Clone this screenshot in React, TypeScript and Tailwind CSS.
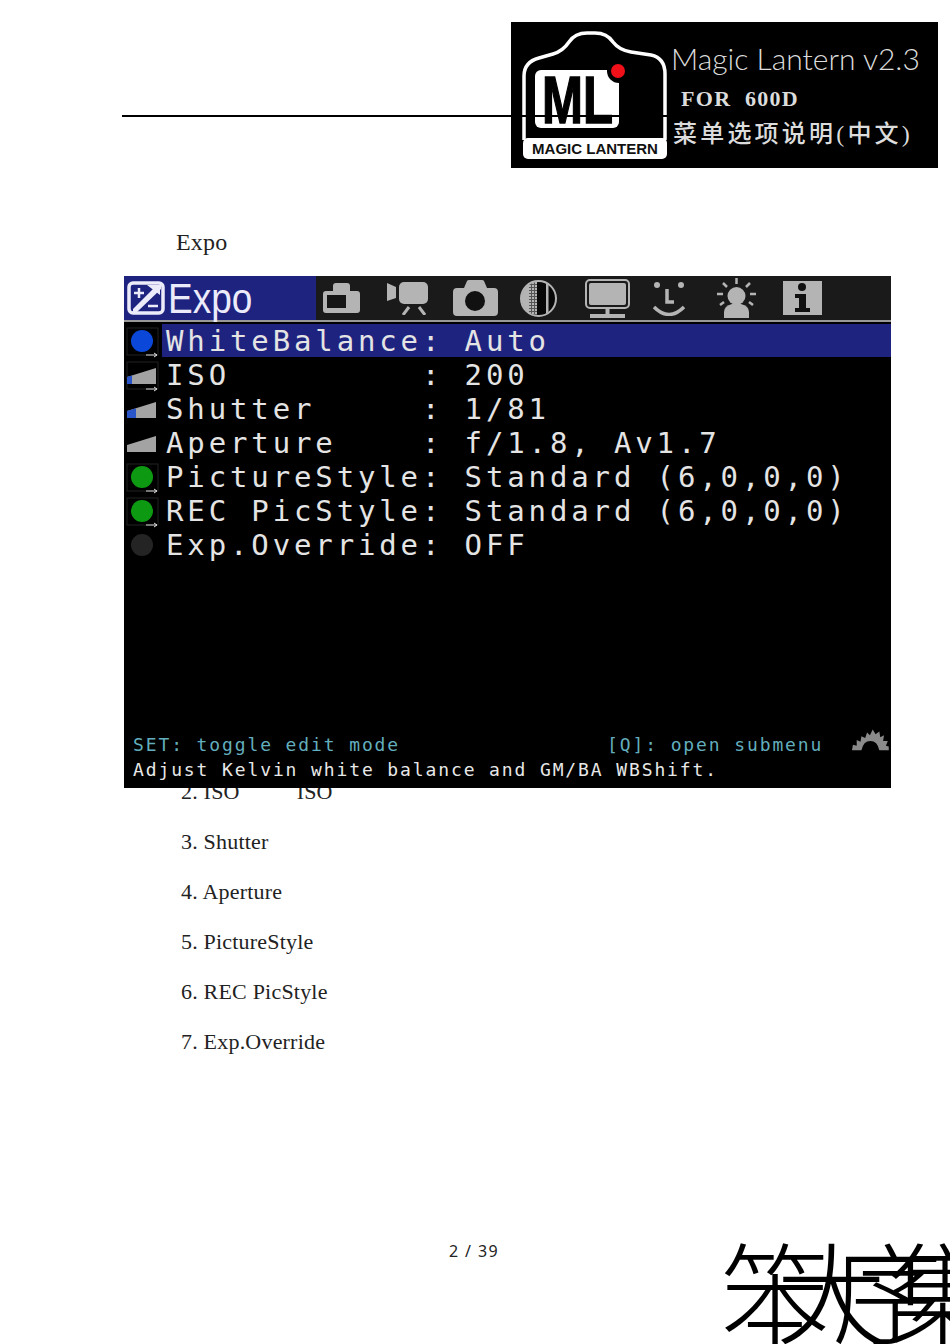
const MENU_FONT = "font-['DejaVu_Sans_Mono',monospace]";

const rows = [
  { kind: "blue", label: "WhiteBalance: Auto", active: true },
  { kind: "iso", label: "ISO         : 200" },
  { kind: "shutter", label: "Shutter     : 1/81" },
  { kind: "aperture", label: "Aperture    : f/1.8, Av1.7" },
  { kind: "green", label: "PictureStyle: Standard (6,0,0,0)" },
  { kind: "green", label: "REC PicStyle: Standard (6,0,0,0)" },
  { kind: "off", label: "Exp.Override: OFF" },
];

const notes = ["3. Shutter", "4. Aperture", "5. PictureStyle", "6. REC PicStyle", "7. Exp.Override"];

function StatusIcon({ kind }: { kind: string }) {
  const isDot = kind === "blue" || kind === "green" || kind === "off";
  const framed = kind === "blue" || kind === "green" || kind === "iso";
  const blueWidth = kind === "iso" ? 5 : kind === "shutter" ? 9 : 0;
  const dotColor = kind === "blue" ? "#0b47d8" : kind === "green" ? "#0d9a12" : "#242424";

  return (
    <svg viewBox="0 0 38 34" className="w-[38px] h-[34px] shrink-0">
      {framed && <rect x="3" y="4" width="31" height="27" fill="none" stroke="#222" strokeWidth="1" />}
      {framed && <path d="M22 31H33M30 29l3 2-3 2" fill="none" stroke="#ddd" strokeWidth="1" />}
      {isDot && <circle cx="18" cy="17" r="11" fill={dotColor} />}
      {!isDot && <path d="M3 19L32 10V26H3Z" fill="#a3a3a3" />}
      {blueWidth > 0 && <path d={`M3 19L${3 + blueWidth} ${19 - blueWidth * 0.31}V26H3Z`} fill="#2a55c8" />}
    </svg>
  );
}

function TabIcons() {
  const gray = "#b4b4b4";
  return (
    <>
      <svg viewBox="0 0 37 30" className="w-[37px] h-[30px] ml-[7px]">
        <path d="M10 8V3q0-3 3-3h11q3 0 3 3v5h7q3 0 3 3v16q0 3-3 3H3q-3 0-3-3V11q0-3 3-3Z" fill={gray} />
        <rect x="4" y="12" width="19" height="13" fill="#161616" />
      </svg>
      <svg viewBox="0 0 41 33" className="w-[41px] h-[33px] ml-[27px]">
        <rect x="12" y="0" width="29" height="22" rx="5" fill={gray} />
        <path d="M0 1L9 5V16L0 19Z" fill={gray} />
        <path d="M22 25L16 33M32 25L38 33" stroke={gray} strokeWidth="3" />
      </svg>
      <svg viewBox="0 0 45 36" className="w-[45px] h-[36px] ml-[25px]">
        <path d="M11 8L14 1q.5-1 2-1h13q1.500 0 2 1l3 7h7q4 0 4 4v20q0 4-4 4H4q-4 0-4-4V12q0-4 4-4Z" fill={gray} />
        <circle cx="22" cy="21" r="10" fill="#111" />
      </svg>
      <svg viewBox="0 0 37 39" className="w-[37px] h-[39px] ml-[22px]">
        <defs>
          <pattern id="dither" width="3" height="3" patternUnits="userSpaceOnUse">
            <rect width="3" height="3" fill="#555" />
            <rect width="2" height="2" fill={gray} />
          </pattern>
          <clipPath id="disc">
            <circle cx="18.500" cy="19.500" r="17" />
          </clipPath>
        </defs>
        <g clipPath="url(#disc)">
          <rect x="0" y="0" width="9" height="39" fill={gray} />
          <rect x="9" y="0" width="8" height="39" fill="url(#dither)" />
          <rect x="17" y="0" width="20" height="39" fill="#080808" />
          <rect x="26" y="0" width="2.500" height="39" fill={gray} />
        </g>
        <circle cx="18.500" cy="19.500" r="17.500" fill="none" stroke={gray} strokeWidth="2" />
      </svg>
      <svg viewBox="0 0 45 39" className="w-[45px] h-[39px] ml-[28px]">
        <rect x="1" y="1" width="43" height="28" rx="4" fill="none" stroke={gray} strokeWidth="2" />
        <rect x="4" y="4" width="37" height="22" rx="2" fill={gray} />
        <rect x="20.500" y="30" width="4" height="5" fill={gray} />
        <rect x="5" y="35" width="35" height="4" fill={gray} />
      </svg>
      <svg viewBox="0 0 32 35" className="w-[32px] h-[35px] ml-[23px]">
        <circle cx="4" cy="4" r="3" fill={gray} />
        <circle cx="28" cy="4" r="3" fill={gray} />
        <path d="M14 8V21H21" fill="none" stroke={gray} strokeWidth="3.500" />
        <path d="M1 26Q16 41 31 26" fill="none" stroke={gray} strokeWidth="3.500" />
      </svg>
      <svg viewBox="0 0 39 40" className="w-[39px] h-[40px] ml-[32px]">
        <circle cx="19.500" cy="18" r="9" fill={gray} />
        <path d="M7 40V34Q7 28 15 26H24Q32 28 32 34V40Z" fill={gray} />
        <path d="M19.500 0V6M6 5L10 9M33 5L29 9M0 16H6M33 16H39M3 27L7 24M36 27L32 24" stroke={gray} strokeWidth="2.500" />
      </svg>
      <svg viewBox="0 0 39 34" className="w-[39px] h-[34px] ml-[27px]">
        <rect width="39" height="34" fill={gray} />
        <circle cx="19" cy="6" r="4" fill="#111" />
        <path d="M12 13H23V27H27V31H12V27H16V17H12Z" fill="#111" />
      </svg>
    </>
  );
}

function Logo() {
  return (
    <div className="absolute left-[511px] top-[22px] w-[427px] h-[146px] bg-black flex">
      <svg viewBox="0 0 160 146" className="w-[160px] h-[146px] shrink-0">
        <path
          d="M13 118V54Q13 40 28 36L42 32Q52 29 58 20Q64 11 76 11H84Q96 11 102 20Q108 28 120 30L140 33Q154 36 154 52V118"
          fill="none"
          stroke="#fff"
          strokeWidth="3.500"
        />
        <rect x="24" y="48" width="84" height="58" rx="6" fill="#fff" />
        <circle cx="108" cy="49" r="12" fill="#000" />
        <circle cx="107" cy="49" r="7" fill="#f0101a" />
        <text x="31" y="101" fontFamily="Liberation Sans" fontWeight="700" fontSize="67" textLength="71" lengthAdjust="spacingAndGlyphs" stroke="#000" strokeWidth="1.500" fill="#000">
          ML
        </text>
        <rect x="12" y="116" width="144" height="21" rx="5" fill="#fff" />
        <text x="84" y="132" textAnchor="middle" fontFamily="Liberation Sans" fontWeight="700" fontSize="15" fill="#111">
          MAGIC LANTERN
        </text>
      </svg>
      <div className="flex flex-col text-[#dcdcdc]">
        <div className="font-['Lato',sans-serif] font-light text-[30px] leading-[36px] mt-[18px] whitespace-nowrap">Magic Lantern v2.3</div>
        <div className="font-['Liberation_Serif',serif] font-bold text-[22px] leading-[26px] mt-[10px] ml-[10px] tracking-[1.300px] whitespace-pre">FOR  600D</div>
        <div className="font-['Liberation_Serif','Noto_Sans_CJK_SC',serif] font-medium text-[24px] leading-[30px] mt-[7px] ml-[2px] tracking-[3.200px] whitespace-nowrap">菜单选项说明(中文)</div>
      </div>
    </div>
  );
}

export default function App() {
  return (
    <div className="relative w-[950px] h-[1344px] overflow-hidden bg-white text-[#222] font-['Liberation_Serif',serif] flex flex-col">
      <Logo />
      <div className="relative z-10 mt-[115px] ml-[122px] w-[545px] h-[2px] bg-black" />

      <div className="mt-[110px] ml-[176px] text-[24px] leading-[30px] tracking-[0.200px]">Expo</div>

      <div className={`relative z-10 mt-[19px] ml-[124px] w-[767px] h-[512px] bg-black flex flex-col ${MENU_FONT}`}>
        <div className="h-[44px] bg-[#1a1a1a] flex items-center shrink-0">
          <div className="w-[192px] h-[44px] bg-[#1e2380] flex items-center shrink-0">
            <svg viewBox="0 0 38 34" className="w-[38px] h-[34px] ml-[3px]">
              <rect x="2" y="2" width="34" height="30" rx="4" fill="#1e2380" stroke="#ecebfa" strokeWidth="3.500" />
              <path d="M34 4L30 4L6 28L6 31L10 31L34 8Z" fill="#ecebfa" />
              <path d="M20 4H33V14Z" fill="#ecebfa" />
              <path d="M12 7V17M7 12H17" stroke="#ecebfa" strokeWidth="2.500" />
              <path d="M21 25H31" stroke="#ecebfa" strokeWidth="2.500" />
            </svg>
            <span className="ml-[3px] font-['Liberation_Sans',sans-serif] text-[43px] leading-[44px] text-[#ecebfa] origin-left scale-x-[0.86] -mt-[1px]">Expo</span>
          </div>
          <TabIcons />
        </div>
        <div className="h-[2px] bg-[#999] shrink-0" />
        <div className="h-[2px] shrink-0" />

        {rows.map((row) => (
          <div key={row.label} className="flex h-[34px] shrink-0">
            <StatusIcon kind={row.kind} />
            <div className={`flex-1 pl-[4px] text-[29px] leading-[35px] h-[33px] tracking-[3.870px] whitespace-pre slashed-zero text-[#e4e4e4] ${row.active ? "bg-[#1e2380]" : ""}`}>
              {row.label}
            </div>
          </div>
        ))}

        <div className="mt-auto pb-[6px] pl-[9px] pr-[2px] text-[18px] tracking-[1.880px] whitespace-pre slashed-zero">
          <div className="flex h-[25px] leading-[25px] text-[#63aebd]">
            <span>SET: toggle edit mode</span>
            <span className="ml-[207px]">[Q]: open submenu</span>
            <svg viewBox="0 0 39 23" className="w-[39px] h-[23px] ml-[29px] -mt-[4px]">
              <path
                d="M0 23L1 17L5 18L5 12L9 14L10 8L14 10L16 4L19 7L22 1L25 6L29 3L30 9L34 7L33 13L38 13L36 18L39 19V23H29Q27 13 19.500 13Q12 13 10 23Z"
                fill="#8a8a8a"
              />
            </svg>
          </div>
          <div className="h-[25px] leading-[25px] text-[#e8e8e8]">Adjust Kelvin white balance and GM/BA WBShift.</div>
        </div>
      </div>

      <div className="-mt-[10px] ml-[181px] flex flex-col text-[22px] leading-[28px] tracking-[0.200px]">
        <div className="whitespace-pre h-[28px]">2. ISO<span className="ml-[57px]">ISO</span></div>
        {notes.map((note) => (
          <div key={note} className="mt-[22px]">{note}</div>
        ))}
      </div>

      <div className="absolute left-[449px] top-[1241px] font-['Noto_Sans',sans-serif] text-[16px] leading-[20px] tracking-[1.400px] whitespace-pre">2 / 39</div>

      <div className="absolute left-[720px] top-[1228px] text-[110px] leading-[120px] tracking-[-54px] whitespace-nowrap font-['Noto_Sans_CJK_SC',sans-serif] font-light text-black">
        笨大序集
      </div>
    </div>
  );
}
